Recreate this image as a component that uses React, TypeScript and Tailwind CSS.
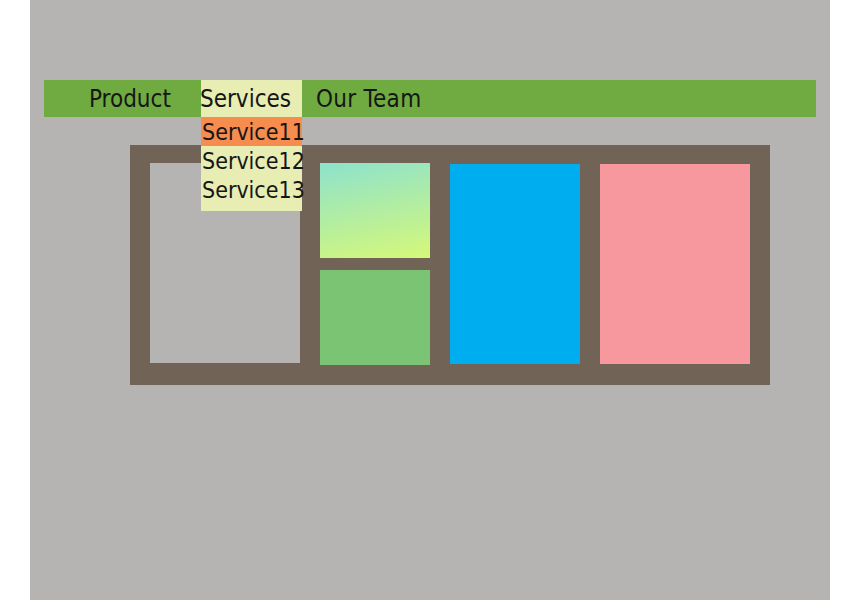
export default function App() {
    const font = { fontFamily: '"DejaVu Sans Condensed", "DejaVu Sans", Tahoma, sans-serif' };

    return (
        <div className="w-[860px] h-[600px] bg-white" style={font}>
            <div className="ml-[30px] w-[800px] h-[600px] bg-[#b5b4b2] pt-[80px]">
                {/* Nav bar */}
                <nav className="ml-[14px] w-[772px] h-[37px] bg-[#6fab41] flex items-stretch text-[24px] text-[#161616]">
                    <div className="ml-[45px] w-[112px] pt-px flex items-center">Product</div>
                    <div className="relative w-[101px] bg-[#e7edb3] pt-px flex items-center">
                        <span className="-ml-px">Services</span>
                        {/* Dropdown */}
                        <div className="absolute left-0 top-[37px] w-[101px] bg-[#e7edb3] pb-[7px] z-10 text-[23px]">
                            <div className="h-[29px] bg-[#f68c4e] pl-px pt-[2px] flex items-center">Service11</div>
                            <div className="h-[29px] pl-px pt-[2px] flex items-center">Service12</div>
                            <div className="h-[29px] pl-px pt-[2px] flex items-center">Service13</div>
                        </div>
                    </div>
                    <div className="ml-[14px] pt-px flex items-center tracking-[0.3px]">Our Team</div>
                </nav>

                {/* Panels */}
                <div className="ml-[100px] mt-[28px] w-[640px] h-[240px] bg-[#726357] px-[20px] pt-[18px] flex gap-[20px] items-start">
                    <div className="w-[150px] h-[200px] bg-[#b5b4b2]" />
                    <div className="w-[110px] flex flex-col gap-[12px]">
                        <div className="h-[95px] bg-[linear-gradient(168deg,#8de2cc,#d6f879)]" />
                        <div className="h-[95px] bg-[#7bc474]" />
                    </div>
                    <div className="w-[130px] h-[200px] mt-px bg-[#00adee]" />
                    <div className="w-[150px] h-[200px] mt-px bg-[#f6989d]" />
                </div>
            </div>
        </div>
    );
}
